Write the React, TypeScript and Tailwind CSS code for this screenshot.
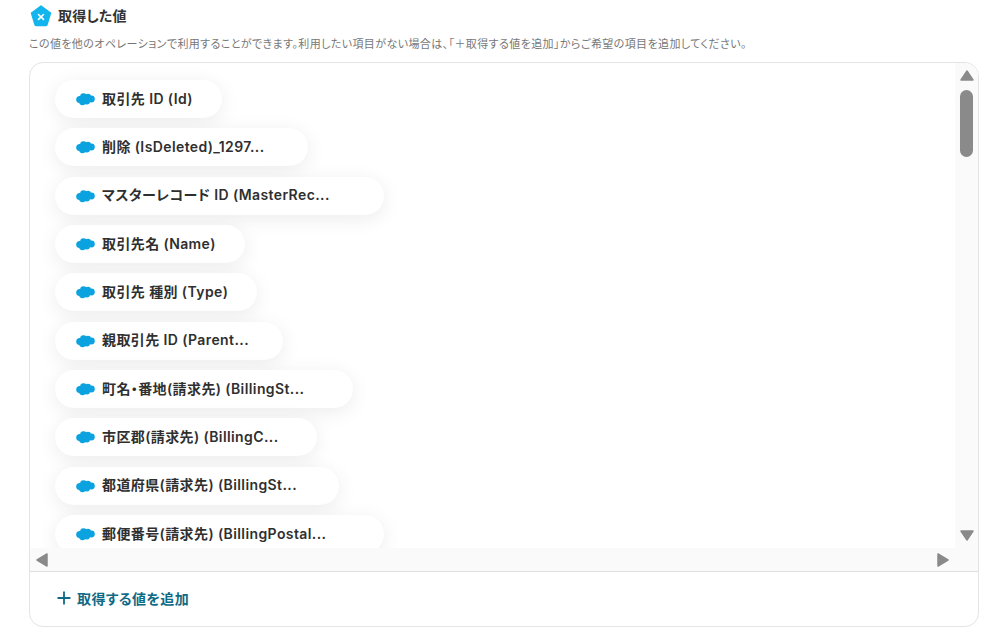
const fields = [
  { label: '取引先 ID (Id)', width: 'w-[167px]' },
  { label: '削除 (IsDeleted)_1297...', width: 'w-[253px]' },
  { label: 'マスターレコード ID (MasterRec...', width: 'w-[329px]' },
  { label: '取引先名 (Name)', width: 'w-[190px]' },
  { label: '取引先 種別 (Type)', width: 'w-[202px]' },
  { label: '親取引先 ID (Parent...', width: 'w-[228px]' },
  { label: '町名・番地(請求先) (BillingSt...', width: 'w-[298px]' },
  { label: '市区郡(請求先) (BillingC...', width: 'w-[262px]' },
  { label: '都道府県(請求先) (BillingSt...', width: 'w-[284px]' },
  { label: '郵便番号(請求先) (BillingPostal...', width: 'w-[329px]' },
];

function CloudIcon() {
  return (
    <svg className="w-[19px] h-[14px] shrink-0" viewBox="0 0 19 14" fill="#0ba2e0">
      <circle cx="3.8" cy="7.5" r="3.6" />
      <circle cx="7.5" cy="4.6" r="3.4" />
      <circle cx="12" cy="4.8" r="3" />
      <circle cx="15.4" cy="7" r="3.4" />
      <circle cx="10.8" cy="9.2" r="3.2" />
      <circle cx="6.5" cy="9.8" r="3.4" />
    </svg>
  );
}

function PentagonIcon() {
  return (
    <svg className="w-[22px] h-[22px] shrink-0" viewBox="0 0 22 22">
      <path
        d="M11 1 L20.5 8 L17 19.5 Q16.8 20.5 15.5 20.5 L6.5 20.5 Q5.2 20.5 5 19.5 L1.5 8 Z"
        fill="#12b5ec"
        stroke="#12b5ec"
        strokeWidth="1.5"
        strokeLinejoin="round"
      />
      <path d="M8.5 9.5 L13.5 14.4 M13.5 9.5 L8.5 14.4" stroke="#fff" strokeWidth="1.6" strokeLinecap="round" />
    </svg>
  );
}

function Arrow({ d }: { d: string }) {
  return (
    <svg className="w-[16px] h-[14px] shrink-0" viewBox="0 0 16 14" fill="#8a8a8a" stroke="#8a8a8a" strokeWidth="1.5" strokeLinejoin="round">
      <path d={d} />
    </svg>
  );
}

export default function App() {
  return (
    <div className="w-[1000px] h-[638px] bg-white overflow-hidden pl-[29px] pr-[21px] font-['Inter','Noto_Sans_CJK_JP',sans-serif] [font-feature-settings:'palt']">
      <div className="flex items-center gap-[6px] pl-[1px] pt-[5px] h-[26px]">
        <PentagonIcon />
        <h2 className="text-[14px] font-semibold tracking-[0.2px] text-[#333] leading-[20px]">取得した値</h2>
      </div>
      <p className="mt-[10px] h-[16px] text-[11px] tracking-[0.4px] leading-[16px] text-[#777] whitespace-nowrap">
        この値を他のオペレーションで利用することができます。利用したい項目がない場合は、「＋取得する値を追加」からご希望の項目を追加してください。
      </p>
      <div className="mt-[10px] h-[565px] border border-[#e4e4e4] rounded-[14px] overflow-hidden flex flex-col">
        <div className="flex h-[485px]">
          <div className="flex-1 overflow-hidden pl-[25px] pt-[17px] flex flex-col gap-[10.35px]">
            {fields.map((f) => (
              <div
                key={f.label}
                className={`${f.width} h-[38px] shrink-0 rounded-full bg-white shadow-[0_4px_20px_rgba(0,0,0,0.08)] flex items-center gap-[7px] pl-[21px] text-[14px] font-semibold tracking-[0.4px] text-[#2f2f2f] whitespace-nowrap`}
              >
                <CloudIcon />
                <span className="pb-[2px]">{f.label}</span>
              </div>
            ))}
          </div>
          <div className="w-[23px] bg-[#fafafa] flex flex-col items-center py-[6px]">
            <Arrow d="M8 2 L14 11 L2 11 Z" />
            <div className="mt-[7px] w-[13px] h-[67px] rounded-full bg-[#8a8a8a]" />
            <div className="flex-1" />
            <Arrow d="M2 3 L14 3 L8 12 Z" />
          </div>
        </div>
        <div className="h-[23px] bg-[#fafafa] flex items-center justify-between pl-[4px] pr-[27px]">
          <Arrow d="M13 1 L13 13 L3 7 Z" />
          <Arrow d="M3 1 L3 13 L13 7 Z" />
        </div>
        <div className="flex-1 pb-[2px] border-t border-[#dfdfdf] flex items-center gap-[6px] pl-[27px]">
          <svg className="w-[14px] h-[14px]" viewBox="0 0 14 14" fill="none" stroke="#0f6a85" strokeWidth="1.8">
            <path d="M7 0.5 V13.5 M0.5 7 H13.5" />
          </svg>
          <span className="text-[14px] font-semibold tracking-[0.4px] text-[#0f6a85]">取得する値を追加</span>
        </div>
      </div>
    </div>
  );
}
